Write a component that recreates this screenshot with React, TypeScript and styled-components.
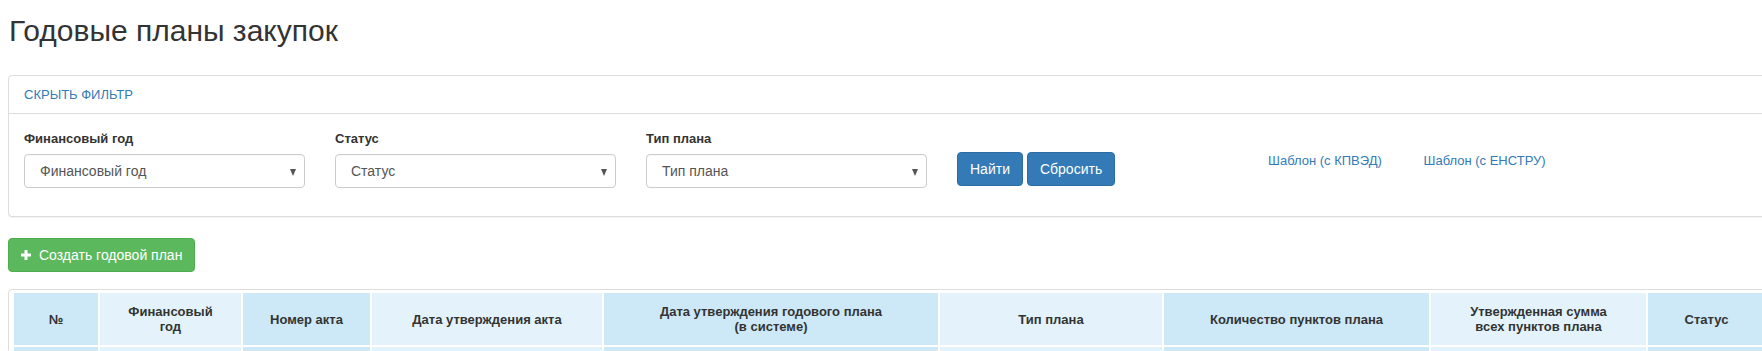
import React from "react";
import styled, { createGlobalStyle } from "styled-components";

const GlobalStyle = createGlobalStyle`
  *, *::before, *::after {
    box-sizing: border-box;
  }
  html, body {
    margin: 0;
    overflow: hidden;
    background: #fff;
  }
  body {
    font-family: "Liberation Sans", Arial, sans-serif;
    font-size: 14px;
    line-height: 20px;
    color: #333;
  }
`;

const Page = styled.div`
  width: 1884px;
  padding: 0 8px;
`;

const Title = styled.h1`
  margin: 13px 0 26px 1px;
  font-size: 30px;
  line-height: 36px;
  font-weight: 400;
  color: #333;
`;

const Panel = styled.section`
  background: #fff;
  border: 1px solid #ddd;
  border-radius: 4px;
  box-shadow: 0 1px 1px rgba(0, 0, 0, 0.05);
  margin-bottom: 21px;
`;

const PanelHeading = styled.div`
  padding: 10px 15px;
  border-bottom: 1px solid #ddd;
  font-size: 13px;
  line-height: 17px;
  text-transform: uppercase;
`;

const Link = styled.a`
  color: #337ab7;
  text-decoration: none;
  cursor: pointer;
`;

const PanelBody = styled.div`
  padding: 15px 15px 15px;
`;

const Row = styled.div`
  display: flex;
  margin: 0 -15px;
`;

const Col = styled.div<{ $w: number; $pt?: number }>`
  flex: 0 0 ${({ $w }) => $w}px;
  padding: ${({ $pt }) => $pt ?? 0}px 15px 0;
`;

const FormGroup = styled.div`
  margin-bottom: 13px;
`;

const Label = styled.label`
  display: block;
  margin-bottom: 5px;
  font-size: 13px;
  font-weight: 700;
  line-height: 20px;
  color: #333;
`;

const SelectBox = styled.div`
  position: relative;
  height: 34px;
  padding: 6px 30px 6px 15px;
  border: 1px solid #ccc;
  border-radius: 4px;
  background: #fff;
  color: #555;
  font-size: 14px;
  line-height: 20px;
  box-shadow: inset 0 1px 1px rgba(0, 0, 0, 0.03);

  &::after {
    content: "";
    position: absolute;
    right: 8px;
    top: 14px;
    border-left: 3.5px solid transparent;
    border-right: 3.5px solid transparent;
    border-top: 7px solid #555;
  }
`;

const Button = styled.button<{ $variant?: "primary" | "success" }>`
  display: inline-flex;
  align-items: center;
  height: 34px;
  padding: 6px 12px;
  border: 1px solid
    ${({ $variant }) => ($variant === "success" ? "#4cae4c" : "#2e6da4")};
  border-radius: 4px;
  background: ${({ $variant }) =>
    $variant === "success" ? "#5cb85c" : "#337ab7"};
  color: #fff;
  font-family: inherit;
  font-size: 14px;
  line-height: 20px;
  cursor: pointer;
`;

const ButtonGroup = styled.div`
  display: flex;
  gap: 4px;
  margin-top: 23px;
`;

const TemplateLink = styled(Link)`
  font-size: 13px;
  line-height: 20px;
`;

const PlusIcon = styled.svg`
  width: 10px;
  height: 10px;
  margin-right: 8px;
`;

const TableWrap = styled.div`
  margin-top: 17px;
  border: 1px solid #ddd;
  border-radius: 4px;
  padding: 1px 3px 0;
`;

const Table = styled.table`
  table-layout: fixed;
  border-collapse: separate;
  border-spacing: 2px;
`;

const Th = styled.th<{ $w: number; $dark: boolean }>`
  width: ${({ $w }) => $w}px;
  height: 52px;
  padding: 4px 8px;
  background: ${({ $dark }) => ($dark ? "#cde9f7" : "#e4f3fb")};
  color: #333;
  font-size: 13px;
  font-weight: 700;
  line-height: 15px;
  text-align: center;
  vertical-align: middle;
`;

const Td = styled.td<{ $dark: boolean }>`
  height: 37px;
  padding: 8px;
  background: ${({ $dark }) => ($dark ? "#cde9f7" : "#e4f3fb")};
`;

const columns = [
  { title: "№", w: 84 },
  { title: "Финансовый\nгод", w: 141 },
  { title: "Номер акта", w: 127 },
  { title: "Дата утверждения акта", w: 230 },
  { title: "Дата утверждения годового плана\n(в системе)", w: 334 },
  { title: "Тип плана", w: 222 },
  { title: "Количество пунктов плана", w: 265 },
  { title: "Утвержденная сумма\nвсех пунктов плана", w: 215 },
  { title: "Статус", w: 117 },
];

const filters = [
  { label: "Финансовый год", placeholder: "Финансовый год" },
  { label: "Статус", placeholder: "Статус" },
  { label: "Тип плана", placeholder: "Тип плана" },
];

const App: React.FC = () => {
  return (
    <Page>
      <GlobalStyle />
      <Title>Годовые планы закупок</Title>

      <Panel>
        <PanelHeading>
          <Link>Скрыть фильтр</Link>
        </PanelHeading>
        <PanelBody>
          <Row>
            {filters.map((f) => (
              <Col $w={311} key={f.label}>
                <FormGroup>
                  <Label>{f.label}</Label>
                  <SelectBox>{f.placeholder}</SelectBox>
                </FormGroup>
              </Col>
            ))}
            <Col $w={311}>
              <ButtonGroup>
                <Button $variant="primary">Найти</Button>
                <Button $variant="primary">Сбросить</Button>
              </ButtonGroup>
            </Col>
            <Col $w={155.5} $pt={21}>
              <TemplateLink>Шаблон (с КПВЭД)</TemplateLink>
            </Col>
            <Col $w={155.5} $pt={21}>
              <TemplateLink>Шаблон (с ЕНСТРУ)</TemplateLink>
            </Col>
          </Row>
        </PanelBody>
      </Panel>

      <Button $variant="success">
        <PlusIcon viewBox="0 0 10 10">
          <path
            d="M3.5 0h3v3.5H10v3H6.5V10h-3V6.5H0v-3h3.5z"
            fill="#fff"
          />
        </PlusIcon>
        Создать годовой план
      </Button>

      <TableWrap>
        <Table>
          <thead>
            <tr>
              {columns.map((c, i) => (
                <Th key={i} $w={c.w} $dark={i % 2 === 0}>
                  {c.title.split("\n").map((line, j) => (
                    <React.Fragment key={j}>
                      {j > 0 && <br />}
                      {line}
                    </React.Fragment>
                  ))}
                </Th>
              ))}
            </tr>
          </thead>
          <tbody>
            <tr>
              {columns.map((_, i) => (
                <Td key={i} $dark={i % 2 === 0} />
              ))}
            </tr>
          </tbody>
        </Table>
      </TableWrap>
    </Page>
  );
};

export default App;
